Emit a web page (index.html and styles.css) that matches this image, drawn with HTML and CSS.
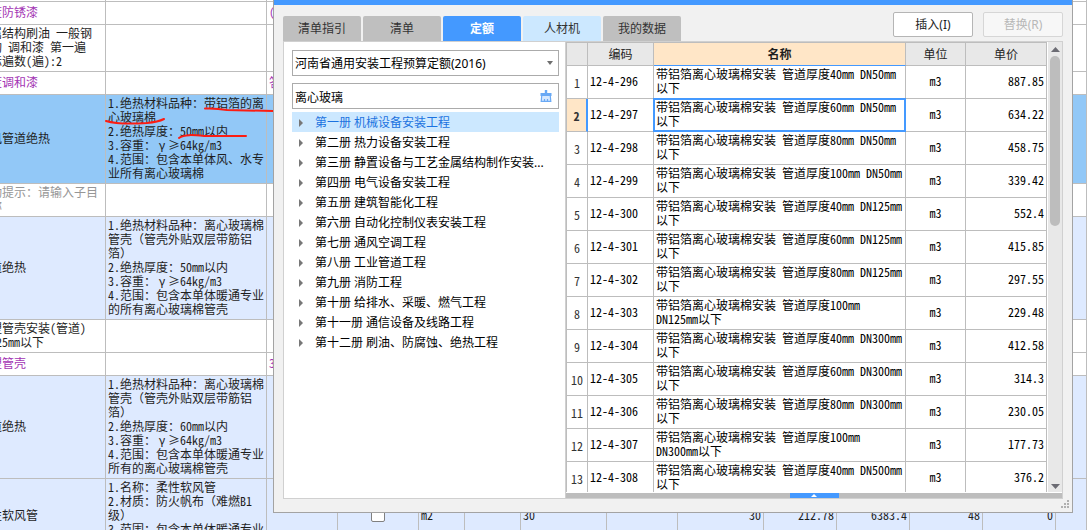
FILE: index.html
```html
<!DOCTYPE html>
<html lang="zh-CN">
<head>
<meta charset="utf-8">
<title>定额查询</title>
<link rel="stylesheet" href="styles.css">
</head>
<body>
<main class="desk">
<table class="sheet">
<colgroup><col class="s-name"><col class="s-spec"><col class="w71"><col class="w81"><col class="w46"><col class="w56"><col class="w86"><col class="w71"><col class="w86"><col class="w73"><col class="w73"><col class="w73"><col class="w73"><col></colgroup>
<tbody>
<tr class="edge"><td></td><td></td><td></td><td></td><td></td><td></td><td></td><td></td><td></td><td></td><td></td><td></td><td></td><td></td></tr>
<tr class="group"><td>度防锈漆</td><td></td><td>(</td><td colspan="11"></td></tr>
<tr><td>属结构刷油 一般钢<br>构 调和漆 第一遍<br>际遍数(遍):2</td><td></td><td></td><td colspan="11"></td></tr>
<tr class="group"><td>度调和漆</td><td></td><td>答</td><td colspan="11"></td></tr>
<tr class="picked"><td>风管道绝热</td><td>1.绝热材料品种：带铝箔的离<br>心玻璃棉<br>2.绝热厚度：50mm以内<br>3.容重：<span class="wide">γ</span><span class="wide">≥</span>64kg/m3<br>4.范围：包含本单体风、水专<br>业所有离心玻璃棉</td><td></td><td colspan="11"></td></tr>
<tr class="hint"><td>动提示：请输入子目<br>称</td><td></td><td></td><td colspan="11"></td></tr>
<tr class="item"><td>道绝热</td><td>1.绝热材料品种：离心玻璃棉<br>管壳<span class="wide">（</span>管壳外贴双层带筋铝<br>箔<span class="wide">）</span><br>2.绝热厚度：50mm以内<br>3.容重：<span class="wide">γ</span><span class="wide">≥</span>64kg/m3<br>4.范围：包含本单体暖通专业<br>的所有离心玻璃棉管壳</td><td></td><td colspan="11"></td></tr>
<tr><td>塑管壳安装(管道)<br>125mm以下</td><td></td><td></td><td colspan="11"></td></tr>
<tr class="group"><td>塑管壳</td><td></td><td>3</td><td colspan="11"></td></tr>
<tr class="item"><td>道绝热</td><td>1.绝热材料品种：离心玻璃棉<br>管壳<span class="wide">（</span>管壳外贴双层带筋铝<br>箔<span class="wide">）</span><br>2.绝热厚度：60mm以内<br>3.容重：<span class="wide">γ</span><span class="wide">≥</span>64kg/m3<br>4.范围：包含本单体暖通专业<br>所有的离心玻璃棉管壳</td><td></td><td colspan="11"></td></tr>
<tr class="item"><td>性软风管</td><td>1.名称：柔性软风管<br>2.材质：防火帆布<span class="wide">（</span>难燃B1<br>级<span class="wide">）</span><br>3.范围：包含本单体暖通专业<br>所有软风管</td><td></td><td class="mid"><input class="check" type="checkbox" aria-label="主要清单"></td><td>m2</td><td></td><td>30</td><td></td><td class="num">30</td><td class="num">212.78</td><td class="num">6383.4</td><td class="num">48</td><td class="num">0</td><td></td></tr>
</tbody>
</table>

<svg class="marks" width="280" height="150" viewBox="0 0 280 150" aria-hidden="true"><path d="M205 108.500Q216 108 227 110L273 111M106 121C116 124 132 124 147 123Q158 122 164 119M179 138C184 134 194 135 205 136L246 136"/></svg>

<section class="dialog" aria-label="查询">
<div class="titlebar"></div>
<header class="toolbar">
<nav class="tabs"><button class="tab">清单指引</button><button class="tab">清单</button><button class="tab active">定额</button><button class="tab light">人材机</button><button class="tab">我的数据</button></nav>
<div class="actions"><button class="btn">插入(I)</button><button class="btn" disabled>替换(R)</button></div>
</header>
<div class="panel">
<aside class="side">
<div class="field"><select class="control" aria-label="定额库"><option>河南省通用安装工程预算定额(2016)</option></select><svg class="caret" width="6" height="4" viewBox="0 0 6 4" aria-hidden="true"><path d="M0 0H6L3 4Z" fill="#6e6e6e"/></svg></div>
<div class="field"><input class="control" type="text" value="离心玻璃" aria-label="搜索"><button class="clear" aria-label="清除"><svg width="12" height="12" viewBox="0 0 12 12"><path d="M4.800 0H7.200V3H11.500V6H.5V3H4.800Z" fill="#69a9f5"/><path d="M1.700 6L1.200 11.300H10.800L10.300 6" fill="#d5e8ff" stroke="#69a9f5" stroke-width="1.200"/><path d="M4.500 11V9M7.500 11V9" stroke="#69a9f5" stroke-width="1.200"/></svg></button></div>
<ul class="tree">
<li><button class="node on">第一册 机械设备安装工程</button></li>
<li><button class="node">第二册 热力设备安装工程</button></li>
<li><button class="node">第三册 静置设备与工艺金属结构制作安装...</button></li>
<li><button class="node">第四册 电气设备安装工程</button></li>
<li><button class="node">第五册 建筑智能化工程</button></li>
<li><button class="node">第六册 自动化控制仪表安装工程</button></li>
<li><button class="node">第七册 通风空调工程</button></li>
<li><button class="node">第八册 工业管道工程</button></li>
<li><button class="node">第九册 消防工程</button></li>
<li><button class="node">第十册 给排水、采暖、燃气工程</button></li>
<li><button class="node">第十一册 通信设备及线路工程</button></li>
<li><button class="node">第十二册 刷油、防腐蚀、绝热工程</button></li>
</ul>
</aside>
<div class="result">
<div class="view">
<div class="clip">
<table class="quota">
<colgroup><col class="q-no"><col class="q-code"><col><col class="q-unit"><col class="q-price"></colgroup>
<thead><tr><th></th><th>编码</th><th class="current">名称</th><th>单位</th><th>单价</th></tr></thead>
<tbody>
<tr><th>1</th><td>12-4-296</td><td>带铝箔离心玻璃棉安装 管道厚度40mm DN50mm<br>以下</td><td class="mid">m3</td><td class="num">887.85</td></tr>
<tr class="sel"><th>2</th><td>12-4-297</td><td class="cell">带铝箔离心玻璃棉安装 管道厚度60mm DN50mm<br>以下</td><td class="mid">m3</td><td class="num">634.22</td></tr>
<tr><th>3</th><td>12-4-298</td><td>带铝箔离心玻璃棉安装 管道厚度80mm DN50mm<br>以下</td><td class="mid">m3</td><td class="num">458.75</td></tr>
<tr><th>4</th><td>12-4-299</td><td>带铝箔离心玻璃棉安装 管道厚度100mm DN50mm<br>以下</td><td class="mid">m3</td><td class="num">339.42</td></tr>
<tr><th>5</th><td>12-4-300</td><td>带铝箔离心玻璃棉安装 管道厚度40mm DN125mm<br>以下</td><td class="mid">m3</td><td class="num">552.4</td></tr>
<tr><th>6</th><td>12-4-301</td><td>带铝箔离心玻璃棉安装 管道厚度60mm DN125mm<br>以下</td><td class="mid">m3</td><td class="num">415.85</td></tr>
<tr><th>7</th><td>12-4-302</td><td>带铝箔离心玻璃棉安装 管道厚度80mm DN125mm<br>以下</td><td class="mid">m3</td><td class="num">297.55</td></tr>
<tr><th>8</th><td>12-4-303</td><td>带铝箔离心玻璃棉安装 管道厚度100mm<br>DN125mm以下</td><td class="mid">m3</td><td class="num">229.48</td></tr>
<tr><th>9</th><td>12-4-304</td><td>带铝箔离心玻璃棉安装 管道厚度40mm DN300mm<br>以下</td><td class="mid">m3</td><td class="num">412.58</td></tr>
<tr><th>10</th><td>12-4-305</td><td>带铝箔离心玻璃棉安装 管道厚度60mm DN300mm<br>以下</td><td class="mid">m3</td><td class="num">314.3</td></tr>
<tr><th>11</th><td>12-4-306</td><td>带铝箔离心玻璃棉安装 管道厚度80mm DN300mm<br>以下</td><td class="mid">m3</td><td class="num">230.05</td></tr>
<tr><th>12</th><td>12-4-307</td><td>带铝箔离心玻璃棉安装 管道厚度100mm<br>DN300mm以下</td><td class="mid">m3</td><td class="num">177.73</td></tr>
<tr><th>13</th><td>12-4-308</td><td>带铝箔离心玻璃棉安装 管道厚度40mm DN500mm<br>以下</td><td class="mid">m3</td><td class="num">376.2</td></tr>
</tbody>
</table>
</div>
<div class="scroll"><svg width="9" height="5" viewBox="0 0 9 5" aria-hidden="true"><path d="M0 5L4.500 0L9 5Z" fill="#6b6b73"/></svg><div class="track"><div class="thumb"></div></div><svg width="9" height="5" viewBox="0 0 9 5" aria-hidden="true"><path d="M0 0H9L4.500 5Z" fill="#6b6b73"/></svg></div>
</div>
<div class="splitter"><button class="handle" aria-label="展开"><svg width="6" height="3" viewBox="0 0 6 3"><path d="M0 3L3 0L6 3Z" fill="#fff"/></svg></button></div>
</div>
</div>
<svg class="grip" width="8" height="8" viewBox="0 0 8 8" aria-hidden="true"><path d="M6 0h2v2H6zM3 3h2v2H3zM6 3h2v2H6zM0 6h2v2H0zM3 6h2v2H3zM6 6h2v2H6z" fill="#b0b0b0"/></svg>
</section>
</main>
</body>
</html>
```
FILE: styles.css
```css
* { box-sizing: border-box; }
body { margin: 0; overflow: hidden; background: #fff; }
button, input, select { font: inherit; color: inherit; margin: 0; padding: 0; border: 0; background: none; }
svg { display: block; }

.desk {
  position: relative;
  height: 100vh;
  overflow: hidden;
  font: 12px/14px "Noto Sans CJK SC", sans-serif;
  color: #1e1e1e;
}

.sheet, .quota {
  table-layout: fixed;
  border-spacing: 0;
  font-feature-settings: "hwid";
  text-spacing-trim: space-all;
  white-space: nowrap;
}
.sheet td, .quota td, .quota th {
  border-right: 1px solid #bdbdbd;
  border-bottom: 1px solid #bdbdbd;
  padding: 1px 2px 3px;
  overflow: hidden;
}
.sheet { width: calc(100% + 10px); margin-left: -10px; }
.sheet tr { height: 23px; }
.sheet td:first-child { padding-left: 0; }
.sheet .edge { height: 2px; }
.sheet .edge td { padding: 0; }
.sheet .group { color: #a334b4; }
.sheet .picked { background: #92c8f7; }
.sheet .hint { color: #969696; }
.sheet .item { background: #deeaff; }
.s-name { width: 116px; }
.s-spec { width: 161px; }
.w46 { width: 46px; }
.w56 { width: 56px; }
.w71 { width: 71px; }
.w73 { width: 73px; }
.w81 { width: 81px; }
.w86 { width: 86px; }
.wide { display: inline-block; width: 12px; text-align: center; font-feature-settings: normal; }
.mid { text-align: center; }
.num { text-align: right; }
.check {
  appearance: none;
  display: block;
  width: 14px;
  height: 14px;
  margin: 0 auto;
  border: 1px solid #808080;
  border-radius: 2px;
  background: #fff;
}

.marks { position: absolute; left: 0; top: 0; fill: none; stroke: #fc1c12; stroke-width: 2; stroke-linecap: round; }

.dialog {
  position: absolute;
  left: 273px;
  right: 14px;
  top: 0;
  bottom: 17px;
  display: flex;
  flex-direction: column;
  padding: 0 9px 13px;
  border: 1px solid #a3a3a3;
  border-top: 0;
  background: #f1f1f1;
  font-family: "Noto Sans", "Noto Sans CJK SC", sans-serif;
}
.titlebar { flex: none; height: 5px; margin: 0 -9px; background: #4499ff; }
.toolbar { display: flex; justify-content: space-between; align-items: flex-end; height: 36px; }
.tabs { display: flex; gap: 2px; }
.tab { width: 78px; height: 25px; background: #bfbfbf; color: #333; border-radius: 2px 2px 0 0; }
.tab.active { background: #4499ff; color: #fff; font-weight: 700; }
.tab.light { background: #cce8ff; }
.actions { display: flex; gap: 10px; padding-bottom: 4px; }
.btn { width: 80px; height: 25px; border: 1px solid #b5b5b5; border-radius: 2px; background: #fff; }
.btn:disabled { color: #b8b8b8; border-color: #d6d6d6; background: #f7f7f7; }

.panel { flex: 1; min-height: 0; display: flex; border: 1px solid #d0d0d0; background: #fff; }
.side { width: 282px; padding: 8px 6px 0 8px; border-right: 1px solid #d0d0d0; color: #000; }
.field { display: flex; align-items: center; height: 26px; margin-bottom: 7px; border: 1px solid #ababab; }
.field:first-child { position: relative; }
.control { flex: 1; min-width: 0; width: 100%; height: 24px; padding: 2px 2px 0; appearance: none; outline: 0; }
.caret { position: absolute; right: 5px; }
.clear { margin-right: 6px; }
.field + .field { margin-bottom: 3px; }
.tree { list-style: none; margin: 0; padding: 0; }
.node { display: flex; align-items: center; gap: 12px; width: 100%; height: 20px; padding: 2px 0 0 7px; white-space: nowrap; }
.node::before { content: ""; border: 4px solid transparent; border-left-color: #777; border-right: 0; }
.node.on { background: #cce8ff; color: #1b72e0; }

.result { flex: 1; min-width: 0; display: flex; flex-direction: column; }
.view { flex: 1; min-height: 0; display: flex; gap: 1px; padding-bottom: 1px; }
.clip { flex: 1; min-width: 0; overflow: hidden; border-left: 1px solid #bdbdbd; border-top: 1px solid #bdbdbd; font-family: "Noto Sans CJK SC", sans-serif; color: #000; }
.quota { width: 100%; }
.quota th { font-weight: 400; color: #333; }
.quota thead th { height: 23px; padding: 2px; background: #e8e8e8; color: #1e1e1e; }
.quota thead .current { background: #ffe6c7; border-bottom-color: #4499ff; font-weight: 700; }
.quota tbody th { padding: 3px 0 2px; background: #fff; }
.quota .sel th { background: #ffe6c7; font-weight: 700; border-right: 2px solid #4499ff; }
.quota .cell { position: relative; overflow: visible; }
.quota .cell::after { content: ""; position: absolute; inset: -1px; border: 2px solid #4499ff; }
.q-no { width: 21px; }
.q-code { width: 66px; }
.q-unit { width: 60px; }
.q-price { width: 81px; }
.scroll { width: 14px; display: flex; flex-direction: column; align-items: center; gap: 4px; padding: 5px 0 3px; background: #e8e8e8; }
.track { flex: 1; width: 10px; }
.thumb { height: 40%; border-radius: 5px; background: #bdbdbd; }
.splitter { display: flex; justify-content: center; height: 5px; background: #bdbdbd; }
.handle { display: flex; align-items: center; justify-content: center; width: 49px; background: #4499ff; }
.grip { position: absolute; right: 3px; bottom: 4px; }
```
